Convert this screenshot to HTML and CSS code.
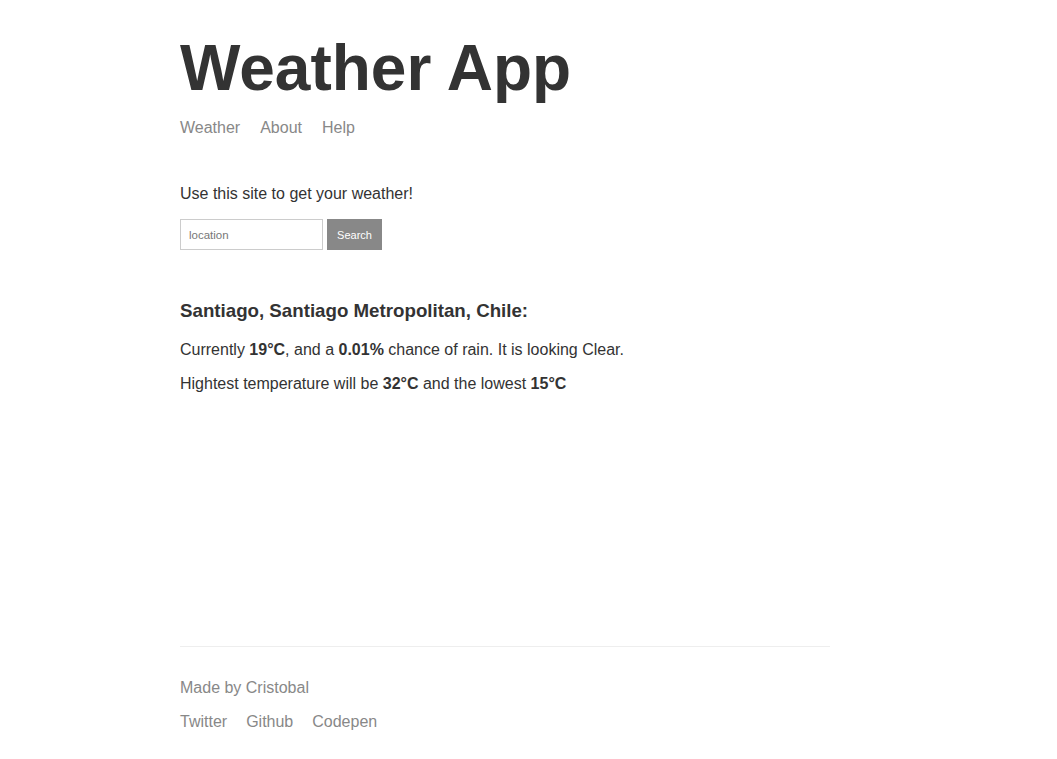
FILE: index.html
```html
<!DOCTYPE html>
<html lang="en">
<head>
<meta charset="utf-8">
<title>Weather App</title>
<link rel="stylesheet" href="styles.css">
</head>
<body>
<div class="page">
  <header class="header">
    <h1 class="title">Weather App</h1>
    <nav class="nav">
      <a class="nav-link" href="#">Weather</a>
      <a class="nav-link" href="#">About</a>
      <a class="nav-link" href="#">Help</a>
    </nav>
  </header>
  <main class="main">
    <p class="intro">Use this site to get your weather!</p>
    <form class="search-form">
      <input class="search-input" type="text" placeholder="location">
      <button class="search-button" type="button">Search</button>
    </form>
    <h3 class="location">Santiago, Santiago Metropolitan, Chile:</h3>
    <p class="forecast forecast-first">Currently <b>19°C</b>, and a <b>0.01%</b> chance of rain. It is looking Clear.</p>
    <p class="forecast forecast-second">Hightest temperature will be <b>32°C</b> and the lowest <b>15°C</b></p>
  </main>
  <footer class="footer">
    <p class="made-by">Made by Cristobal</p>
    <div class="footer-links">
      <a class="footer-link" href="#">Twitter</a>
      <a class="footer-link" href="#">Github</a>
      <a class="footer-link" href="#">Codepen</a>
    </div>
  </footer>
</div>
</body>
</html>
```

FILE: styles.css
```css
html, body {
  margin: 0;
  padding: 0;
  background: #fff;
}

body {
  font-family: "Liberation Sans", Arial, sans-serif;
  color: #333;
  font-size: 16px;
}

.page {
  width: 650px;
  margin-left: 180px;
}

.header {
  padding-top: 36px;
}

.title {
  margin: 0;
  font-size: 64px;
  line-height: 64px;
  font-weight: bold;
  color: #333;
}

.nav {
  margin-top: 18px;
  line-height: 20px;
  display: flex;
}

.nav-link {
  color: #888;
  text-decoration: none;
}

.nav-link + .nav-link {
  margin-left: 20px;
}

.intro {
  margin: 46px 0 0;
  line-height: 20px;
}

.search-form {
  display: flex;
  gap: 4px;
  margin-top: 15px;
  height: 31px;
}

.search-input {
  box-sizing: border-box;
  width: 143px;
  height: 31px;
  margin: 0;
  padding: 0 8px;
  border: 1px solid #ccc;
  font-family: "Liberation Sans", Arial, sans-serif;
  font-size: 11.5px;
  color: #333;
  outline: none;
}

.search-input::placeholder {
  color: #777;
}

.search-button {
  box-sizing: border-box;
  width: 55px;
  height: 31px;
  margin: 0;
  padding: 0;
  border: none;
  background: #888;
  color: #fff;
  font-family: "Liberation Sans", Arial, sans-serif;
  font-size: 11px;
  cursor: pointer;
}

.location {
  margin: 50px 0 0;
  font-size: 18.72px;
  line-height: 22px;
  font-weight: bold;
}

.forecast {
  margin: 0;
  line-height: 20px;
}

.forecast-first {
  margin-top: 18px;
}

.forecast-second {
  margin-top: 14px;
}

.footer {
  margin-top: 252px;
  border-top: 1px solid #eee;
  padding-top: 31px;
  color: #888;
}

.made-by {
  margin: 0;
  line-height: 20px;
}

.footer-links {
  margin-top: 14px;
  line-height: 20px;
  display: flex;
}

.footer-link {
  color: #888;
  text-decoration: none;
}

.footer-link + .footer-link {
  margin-left: 19px;
}
```
